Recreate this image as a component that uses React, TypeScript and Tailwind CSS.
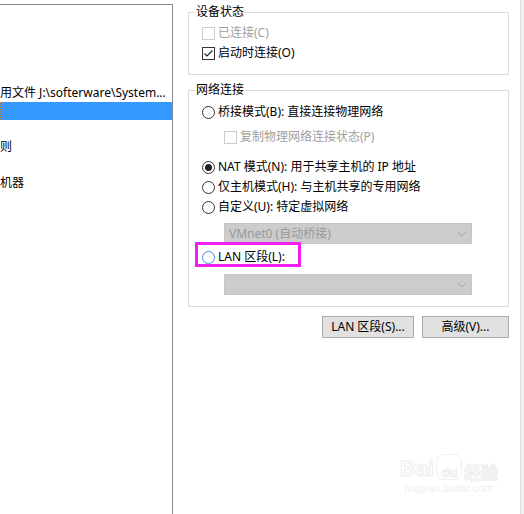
import React from "react";

const ui = "font-['Noto_Sans','Noto_Sans_CJK_SC',sans-serif]";

function CheckBox({ checked = false, disabled = false }: { checked?: boolean; disabled?: boolean }) {
  return (
    <span
      className={`flex h-[13px] w-[13px] shrink-0 items-center justify-center border bg-white ${
        disabled ? "border-[#cccccc]" : "border-[#333333]"
      }`}
    >
      {checked && (
        <svg width="11" height="11" viewBox="0 0 11 11">
          <polyline points="1.5,5.5 4,8 9.5,2.5" fill="none" stroke="#222" strokeWidth="1.2" />
        </svg>
      )}
    </span>
  );
}

function Radio({ checked = false, hover = false }: { checked?: boolean; hover?: boolean }) {
  return (
    <span
      className={`flex h-[13px] w-[13px] shrink-0 items-center justify-center rounded-full border bg-white ${
        hover ? "border-[#3a8ee6]" : "border-[#333333]"
      }`}
    >
      {checked && <span className="h-[7px] w-[7px] rounded-full bg-[#222]" />}
    </span>
  );
}

function Chevron() {
  return (
    <svg width="10" height="6" viewBox="0 0 10 6" className="shrink-0">
      <polyline points="0.5,0.5 5,5 9.5,0.5" fill="none" stroke="#a8a8a8" strokeWidth="1" />
    </svg>
  );
}

function DisabledSelect({ value }: { value?: string }) {
  return (
    <div className="ml-[22px] flex h-[21px] w-[248px] items-center justify-between border border-[#c6c6c6] bg-[#cccccc] pl-[4px] pr-[4px]">
      <span className="text-[12px] leading-none text-[#9a9a9a]">{value ?? ""}</span>
      <Chevron />
    </div>
  );
}

function Row({ children, className = "" }: { children: React.ReactNode; className?: string }) {
  return <div className={`flex h-[20px] items-center gap-[3px] ${className}`}>{children}</div>;
}

function Group({ title, children, className = "", bodyClass = "" }: { title: string; children: React.ReactNode; className?: string; bodyClass?: string }) {
  return (
    <fieldset className={`w-[321px] border border-[#dcdcdc] ${className}`}>
      <legend className="ml-[6px] px-[1px] text-[12px] leading-[16px] text-black">{title}</legend>
      <div className={bodyClass}>{children}</div>
    </fieldset>
  );
}

function Button({ label, width }: { label: string; width: string }) {
  return (
    <div
      className={`flex h-[22px] items-center justify-center border border-[#adadad] bg-[#e1e1e1] text-[12px] leading-none text-black ${width}`}
    >
      {label}
    </div>
  );
}

const listRows: { text: string; selected?: boolean }[] = [
  { text: "用文件 J:\\softerware\\System..." },
  { text: "", selected: true },
  { text: "" },
  { text: "则" },
  { text: "" },
  { text: "机器" },
];

export default function App() {
  return (
    <div className={`relative flex h-[514px] w-[524px] overflow-hidden bg-white ${ui}`}>
      {/* device list, summary column */}
      <div className="mt-[4px] flex w-[173px] shrink-0 flex-col overflow-hidden border-r border-t border-[#828790] pt-[79px]">
        {listRows.map((r, i) => (
          <div
            key={i}
            className={`flex h-[18px] w-[172px] items-center whitespace-nowrap text-[12px] leading-none ${
              r.selected ? "border border-dotted border-[#c47a2c] bg-[#3399ff] text-white" : "text-black"
            }`}
          >
            <span>{r.text}</span>
          </div>
        ))}
      </div>

      {/* settings column */}
      <div className="flex w-[347px] shrink-0 flex-col pl-[15px] pt-[4px] text-[12px] text-black">
        <Group title="设备状态" bodyClass="pb-[11px] pl-[13px] pt-[3px]">
          <Row className="text-[#a0a0a0]">
            <CheckBox disabled />
            <span className="leading-none">已连接(C)</span>
          </Row>
          <Row>
            <CheckBox checked />
            <span className="leading-none">启动时连接(O)</span>
          </Row>
        </Group>

        <Group title="网络连接" className="mt-[7px]" bodyClass="pb-[11px] pl-[13px] pt-[4px]">
          <Row>
            <Radio />
            <span className="leading-none">桥接模式(B): 直接连接物理网络</span>
          </Row>
          <Row className="ml-[22px] mt-[5px] text-[#a0a0a0]">
            <CheckBox disabled />
            <span className="leading-none">复制物理网络连接状态(P)</span>
          </Row>
          <Row className="mt-[10px]">
            <Radio checked />
            <span className="leading-none">NAT 模式(N): 用于共享主机的 IP 地址</span>
          </Row>
          <Row>
            <Radio />
            <span className="leading-none">仅主机模式(H): 与主机共享的专用网络</span>
          </Row>
          <Row>
            <Radio />
            <span className="leading-none">自定义(U): 特定虚拟网络</span>
          </Row>
          <div className="mt-[6px]">
            <DisabledSelect value="VMnet0 (自动桥接)" />
          </div>
          <Row className="relative mt-[3px]">
            <Radio hover />
            <span className="leading-none">LAN 区段(L):</span>
            <span className="pointer-events-none absolute left-[-7px] top-[-5px] h-[25px] w-[106px] border-[3px] border-[#f01ff0]" />
          </Row>
          <div className="mt-[7px]">
            <DisabledSelect />
          </div>
        </Group>

        <div className="mt-[9px] flex w-[321px] justify-end gap-[8px]">
          <Button label="LAN 区段(S)..." width="w-[92px]" />
          <Button label="高级(V)..." width="w-[87px]" />
        </div>
      </div>

      {/* window edge */}
      <div className="ml-auto w-[4px] shrink-0 border-l border-[#dcdcdc] bg-[#f0f0f0]" />

      {/* faint watermark */}
      <div className="pointer-events-none absolute left-[400px] top-[454px] flex flex-col items-center text-white">
        <div className="flex items-end gap-[2px] font-['Liberation_Sans',sans-serif] text-[22px] font-bold leading-none [-webkit-text-stroke:1px_#ededed]">
          <span>Bai</span>
          <span className="flex h-[26px] w-[26px] items-end justify-center rounded-[8px] border border-[#efefef] text-[13px] [-webkit-text-stroke:1px_#ededed]">
            du
          </span>
          <span className="font-['Noto_Sans_CJK_SC',sans-serif] text-[17px]">经验</span>
        </div>
        <span className="mt-[3px] font-['Liberation_Sans',sans-serif] text-[11px] leading-none text-[#f0f0f0]">
          jingyan.baidu.com
        </span>
      </div>
    </div>
  );
}
